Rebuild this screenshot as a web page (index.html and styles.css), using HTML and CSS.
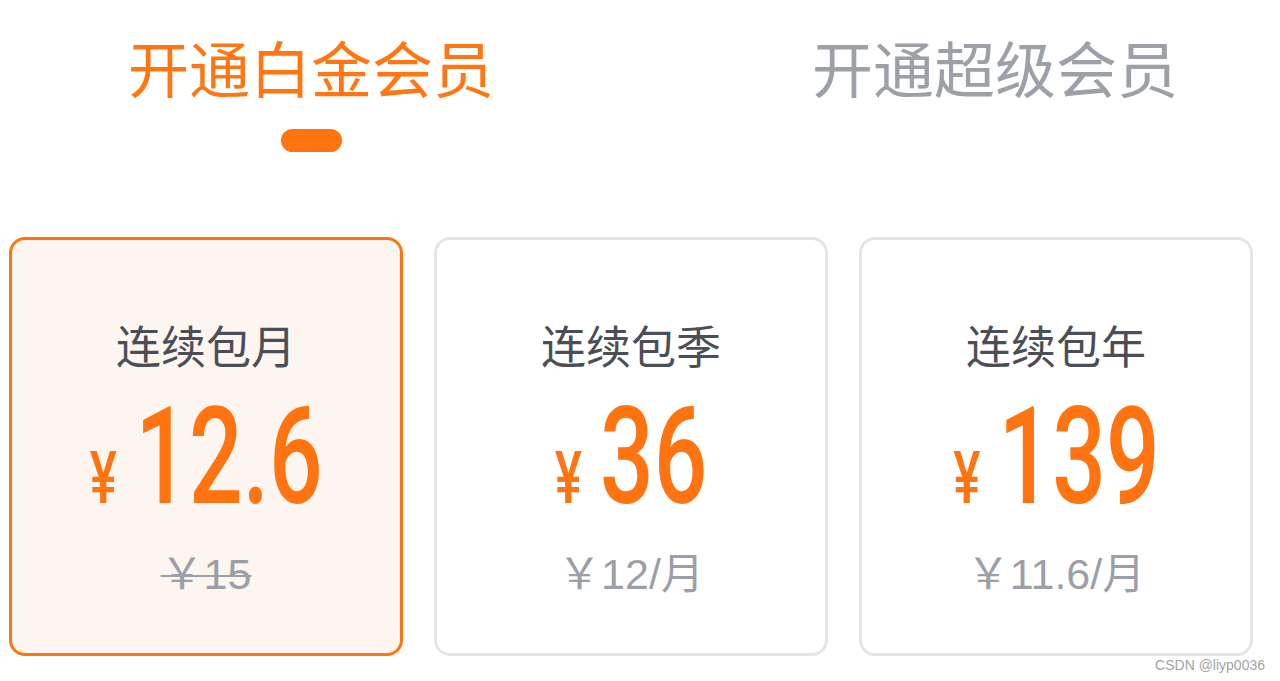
FILE: index.html
```html
<!DOCTYPE html>
<html lang="zh-CN">
<head>
<meta charset="utf-8">
<title>开通会员</title>
<link rel="stylesheet" href="styles.css">
</head>
<body>
<div class="page">
  <div class="tabs">
    <div class="tab tab-active">
      <span class="tab-label">开通白金会员</span>
      <span class="tab-bar"></span>
    </div>
    <div class="tab">
      <span class="tab-label">开通超级会员</span>
    </div>
  </div>

  <div class="plans">
    <div class="plan plan-selected">
      <div class="plan-name">连续包月</div>
      <div class="plan-price"><span class="yen">¥</span><span class="amount">12.6</span></div>
      <div class="plan-sub plan-sub-strike">￥15</div>
    </div>
    <div class="plan">
      <div class="plan-name">连续包季</div>
      <div class="plan-price"><span class="yen">¥</span><span class="amount">36</span></div>
      <div class="plan-sub">￥12/月</div>
    </div>
    <div class="plan">
      <div class="plan-name">连续包年</div>
      <div class="plan-price"><span class="yen">¥</span><span class="amount">139</span></div>
      <div class="plan-sub">￥11.6/月</div>
    </div>
  </div>

  <div class="watermark">CSDN @liyp0036</div>
</div>
</body>
</html>
```

FILE: styles.css
```css
* {
  box-sizing: border-box;
}

html, body {
  margin: 0;
  padding: 0;
  background: #ffffff;
}

body {
  font-family: "Noto Sans CJK SC", "Noto Sans", sans-serif;
}

.page {
  position: relative;
  width: 1280px;
  height: 681px;
  overflow: hidden;
}

.tabs {
  display: flex;
  justify-content: space-between;
  padding: 36px 102px 0 128px;
}

.tab {
  display: flex;
  flex-direction: column;
  align-items: center;
}

.tab-label {
  font-size: 61px;
  line-height: 61px;
  color: #9ca0a8;
  white-space: nowrap;
}

.tab-active .tab-label {
  color: #ff7613;
}

.tab-bar {
  display: block;
  width: 61px;
  height: 23px;
  margin-top: 32px;
  border-radius: 12px;
  background: #ff7410;
}

.plans {
  display: flex;
  gap: 31px;
  padding: 0 27px 0 9px;
  margin-top: 85px;
}

.plan {
  flex: 1 1 0;
  height: 419px;
  border: 3px solid #e4e5e9;
  border-radius: 16px;
  background: #ffffff;
  display: flex;
  flex-direction: column;
  align-items: center;
  padding-top: 82px;
}

.plan-selected {
  border-color: #ff7410;
  background: #fdf5f0;
}

.plan-name {
  font-size: 45px;
  line-height: 45px;
  color: #4b4e56;
  white-space: nowrap;
}

.plan-price {
  display: flex;
  align-items: baseline;
  justify-content: center;
  margin-top: 23px;
  height: 135px;
  color: #ff7410;
  font-family: Roboto, "Liberation Sans", sans-serif;
  font-weight: 500;
  transform: scaleX(0.7);
  transform-origin: center;
}

.yen {
  font-size: 73px;
  line-height: 135px;
  margin-right: 26px;
}

.amount {
  font-size: 135px;
  line-height: 135px;
  letter-spacing: 0;
}

.plan-sub {
  margin-top: 28px;
  font-family: "Liberation Sans", "Noto Sans CJK SC", sans-serif;
  font-size: 43px;
  line-height: 43px;
  color: #9c9fa7;
  white-space: nowrap;
}

.plan-sub-strike {
  text-decoration: line-through;
  text-decoration-thickness: 2px;
  text-decoration-color: #9c9fa7;
}

.watermark {
  position: absolute;
  right: 15px;
  bottom: 8px;
  font-family: "Liberation Sans", sans-serif;
  font-size: 14px;
  color: #a3a3a3;
}
```
